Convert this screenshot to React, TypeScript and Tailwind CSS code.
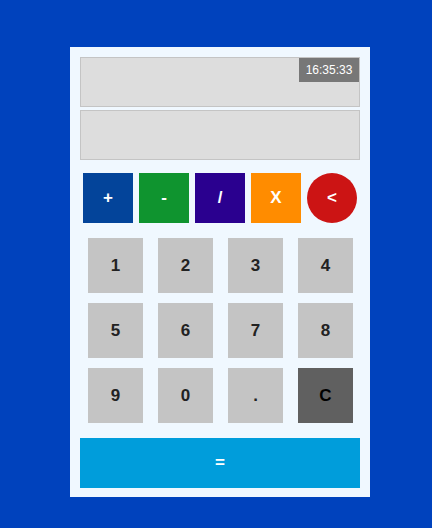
const ops = [
  { label: "+", cls: "bg-[#03449a]" },
  { label: "-", cls: "bg-[#0f942f]" },
  { label: "/", cls: "bg-[#2a008f]" },
  { label: "X", cls: "bg-[#ff8c00]" },
];

const keys = ["1", "2", "3", "4", "5", "6", "7", "8", "9", "0", ".", "C"];

export default function App() {
  return (
    <div className="w-[432px] h-[528px] bg-[#0042bd] pt-[47px] font-['Liberation_Sans',Arial,sans-serif]">
      <div className="ml-[70px] w-[300px] h-[450px] bg-[#f0f8ff] p-[10px]">
        {/* экраны */}
        <div className="relative h-[50px] bg-[#dddddd] border border-[#c4c4c4]">
          <span className="absolute right-0 top-0 h-[24px] w-[60px] bg-[#777777] text-white text-[12px] flex items-center justify-center">
            16:35:33
          </span>
        </div>
        <div className="mt-[3px] h-[50px] bg-[#dddddd] border border-[#c4c4c4]"></div>

        {/* операции */}
        <div className="mt-[10px] flex">
          {ops.map((o) => (
            <button
              key={o.label}
              className={`m-[3px] w-[50px] h-[50px] ${o.cls} text-white font-bold text-[17px] flex items-center justify-center`}
            >
              {o.label}
            </button>
          ))}
          <button className="m-[3px] w-[50px] h-[50px] rounded-full bg-[#cc1414] text-white font-bold text-[17px] flex items-center justify-center">
            &lt;
          </button>
        </div>

        {/* цифры */}
        <div className="mt-[12px] grid grid-cols-[repeat(4,55px)] gap-x-[15px] gap-y-[10px] px-[8px]">
          {keys.map((k) => (
            <button
              key={k}
              className={`w-[55px] h-[55px] font-bold text-[17px] flex items-center justify-center ${
                k === "C" ? "bg-[#606060] text-black" : "bg-[#c4c4c4] text-[#222222]"
              }`}
            >
              {k}
            </button>
          ))}
        </div>

        <button className="mt-[15px] w-[280px] h-[50px] bg-[#009ddb] text-white font-bold text-[17px] flex items-center justify-center">
          =
        </button>
      </div>
    </div>
  );
}
